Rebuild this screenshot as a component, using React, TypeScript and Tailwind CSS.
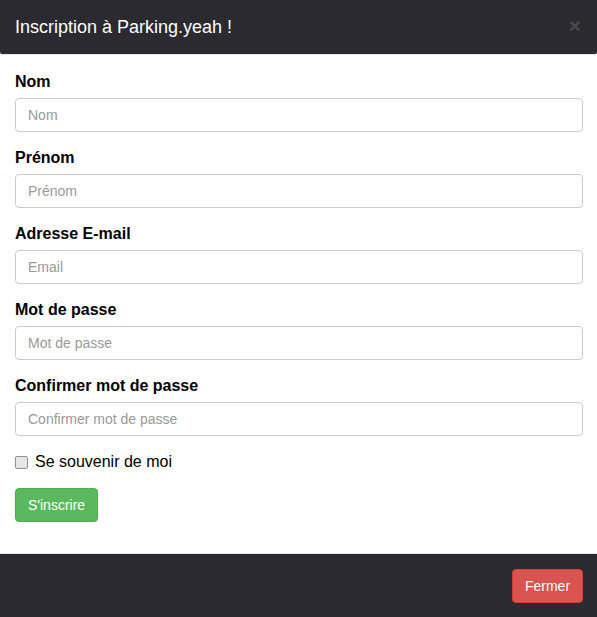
import React from "react";

const fields = [
  { label: "Nom", ph: "Nom", type: "text" },
  { label: "Prénom", ph: "Prénom", type: "text" },
  { label: "Adresse E-mail", ph: "Email", type: "email" },
  { label: "Mot de passe", ph: "Mot de passe", type: "password" },
  { label: "Confirmer mot de passe", ph: "Confirmer mot de passe", type: "password" },
];

export default function App() {
  return (
    <div
      className="w-[597px] h-[617px] bg-white flex flex-col text-[#333]"
      style={{ fontFamily: '"Liberation Sans", Arial, sans-serif' }}
    >
      <div className="h-[55px] shrink-0 bg-[#2b2a30] border-b border-[#e5e5e5] rounded-bl-[3px] rounded-br-[3px] flex items-center justify-between px-[15px]">
        <h4 className="text-white text-[18px] leading-[26px] m-0 pb-[1px]">Inscription à Parking.yeah !</h4>
        <span className="text-[21px] font-bold leading-none text-[#4a4950] mr-[1px] mt-[-4px]">×</span>
      </div>
      <div className="flex-1 px-[15px] pt-[16px]">
        {fields.map((f) => (
          <div key={f.label} className="mb-[15px]">
            <label className="block text-[16px] leading-[22px] font-bold text-black mb-[5px]">{f.label}</label>
            <input
              type={f.type}
              placeholder={f.ph}
              className="block w-[568px] h-[34px] px-[12px] text-[14px] border border-[#ccc] rounded-[4px] placeholder:text-[#999] outline-none"
            />
          </div>
        ))}
        <div className="flex items-center h-[22px] mb-[15px]">
          <span className="w-[13px] h-[13px] mr-[7px] border border-[#8f8f8f] bg-[#e6e6e6] rounded-[2px]" />
          <span className="text-[16px] text-black">Se souvenir de moi</span>
        </div>
        <button className="h-[34px] px-[12px] text-[14px] text-white bg-[#5cb85c] border border-[#4cae4c] rounded-[4px] w-[83px]">
          S'inscrire
        </button>
      </div>
      <div className="h-[64px] shrink-0 bg-[#2b2a30] border-t border-[#e5e5e5] flex items-center justify-end px-[14px] pt-[1px]">
        <button className="h-[34px] w-[71px] text-[14px] text-white bg-[#d9534f] border border-[#d43f3a] rounded-[4px]">
          Fermer
        </button>
      </div>
    </div>
  );
}
